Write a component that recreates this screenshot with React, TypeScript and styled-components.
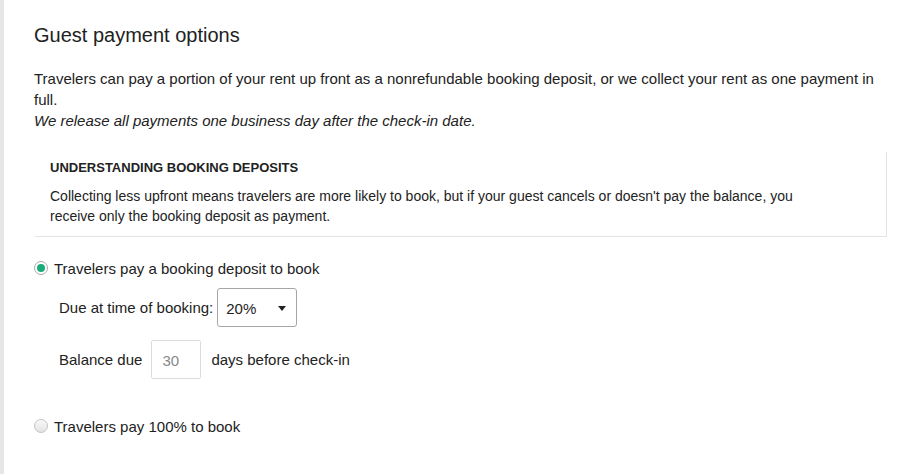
import React from "react";
import styled, { createGlobalStyle } from "styled-components";

const GlobalStyle = createGlobalStyle`
  html, body { margin: 0; padding: 0; background: #fff; }
  body { font-family: "Liberation Sans", Arial, sans-serif; color: #222; }
  * { box-sizing: border-box; }
`;

const Page = styled.div`
  display: flex;
  min-height: 474px;
  border-left: 4px solid #e6e6e6;
  padding: 23px 16px 0 30px;
`;

const Column = styled.div`
  flex: 1;
  display: flex;
  flex-direction: column;
`;

const Title = styled.h2`
  margin: 0;
  font-size: 20px;
  line-height: 24px;
  font-weight: normal;
  color: #222;
`;

const Intro = styled.p`
  margin: 21px 0 0;
  font-size: 15px;
  line-height: 21px;
`;

const Note = styled.em`
  display: block;
  font-style: italic;
`;

const InfoBox = styled.div`
  margin: 21px 0 0 1px;
  padding: 7px 15px 10px 15px;
  border-right: 1px solid #e3e3e3;
  border-bottom: 1px solid #e3e3e3;
`;

const InfoHeading = styled.h3`
  margin: 0;
  font-size: 13px;
  line-height: 17px;
  font-weight: bold;
  text-transform: uppercase;
`;

const InfoText = styled.p`
  margin: 10px 0 0;
  font-size: 14px;
  line-height: 20px;
  max-width: 760px;
`;

const OptionRow = styled.label<{ $top: number }>`
  display: flex;
  align-items: center;
  gap: 6px;
  margin-top: ${(p) => p.$top}px;
  height: 20px;
  font-size: 15px;
  cursor: pointer;
`;

const Radio = styled.input.attrs({ type: "radio" })`
  appearance: none;
  -webkit-appearance: none;
  margin: 0;
  width: 14px;
  height: 14px;
  border-radius: 50%;
  border: 1px solid #c4c4c4;
  background: linear-gradient(#fafafa, #e2e2e2);
  display: grid;
  place-items: center;
  &:checked {
    background: #fff;
    border-color: #a8a8a8;
  }
  &:checked::after {
    content: "";
    width: 8px;
    height: 8px;
    border-radius: 50%;
    background: #1aab7a;
  }
`;

const SubRow = styled.div<{ $top: number }>`
  display: flex;
  align-items: center;
  margin: ${(p) => p.$top}px 0 0 25px;
  font-size: 15px;
`;

const FieldLabel = styled.span<{ $gap: number }>`
  margin-right: ${(p) => p.$gap}px;
`;

const SelectBox = styled.div`
  width: 80px;
  height: 39px;
  border: 1px solid #a6a6a6;
  border-radius: 3px;
  display: flex;
  align-items: center;
  justify-content: space-between;
  padding: 2px 10px 0 8px;
  font-size: 15px;
  background: #fff;
`;

const DaysInput = styled.input`
  width: 50px;
  height: 39px;
  border: 1px solid #dcdcdc;
  border-radius: 2px;
  padding: 1px 0 0 10px;
  font-family: "Liberation Sans", Arial, sans-serif;
  font-size: 15px;
  color: #888;
  margin-right: 10px;
  outline: none;
`;

export default function App() {
  return (
    <>
      <GlobalStyle />
      <Page>
        <Column>
          <Title>Guest payment options</Title>
          <Intro>
            Travelers can pay a portion of your rent up front as a nonrefundable booking deposit, or we collect your rent as one payment in full.
            <Note>We release all payments one business day after the check-in date.</Note>
          </Intro>
          <InfoBox>
            <InfoHeading>Understanding booking deposits</InfoHeading>
            <InfoText>
              Collecting less upfront means travelers are more likely to book, but if your guest cancels or doesn't pay the balance, you receive only the booking deposit as payment.
            </InfoText>
          </InfoBox>
          <OptionRow $top={21}>
            <Radio name="pay" defaultChecked />
            Travelers pay a booking deposit to book
          </OptionRow>
          <SubRow $top={10}>
            <FieldLabel $gap={4}>Due at time of booking:</FieldLabel>
            <SelectBox>
              <span>20%</span>
              <svg width="8" height="5" viewBox="0 0 8 5">
                <path d="M0 0 H8 L4 5 Z" fill="#222" />
              </svg>
            </SelectBox>
          </SubRow>
          <SubRow $top={13}>
            <FieldLabel $gap={9}>Balance due</FieldLabel>
            <DaysInput defaultValue="30" />
            <span>days before check-in</span>
          </SubRow>
          <OptionRow $top={37}>
            <Radio name="pay" />
            Travelers pay 100% to book
          </OptionRow>
        </Column>
      </Page>
    </>
  );
}
